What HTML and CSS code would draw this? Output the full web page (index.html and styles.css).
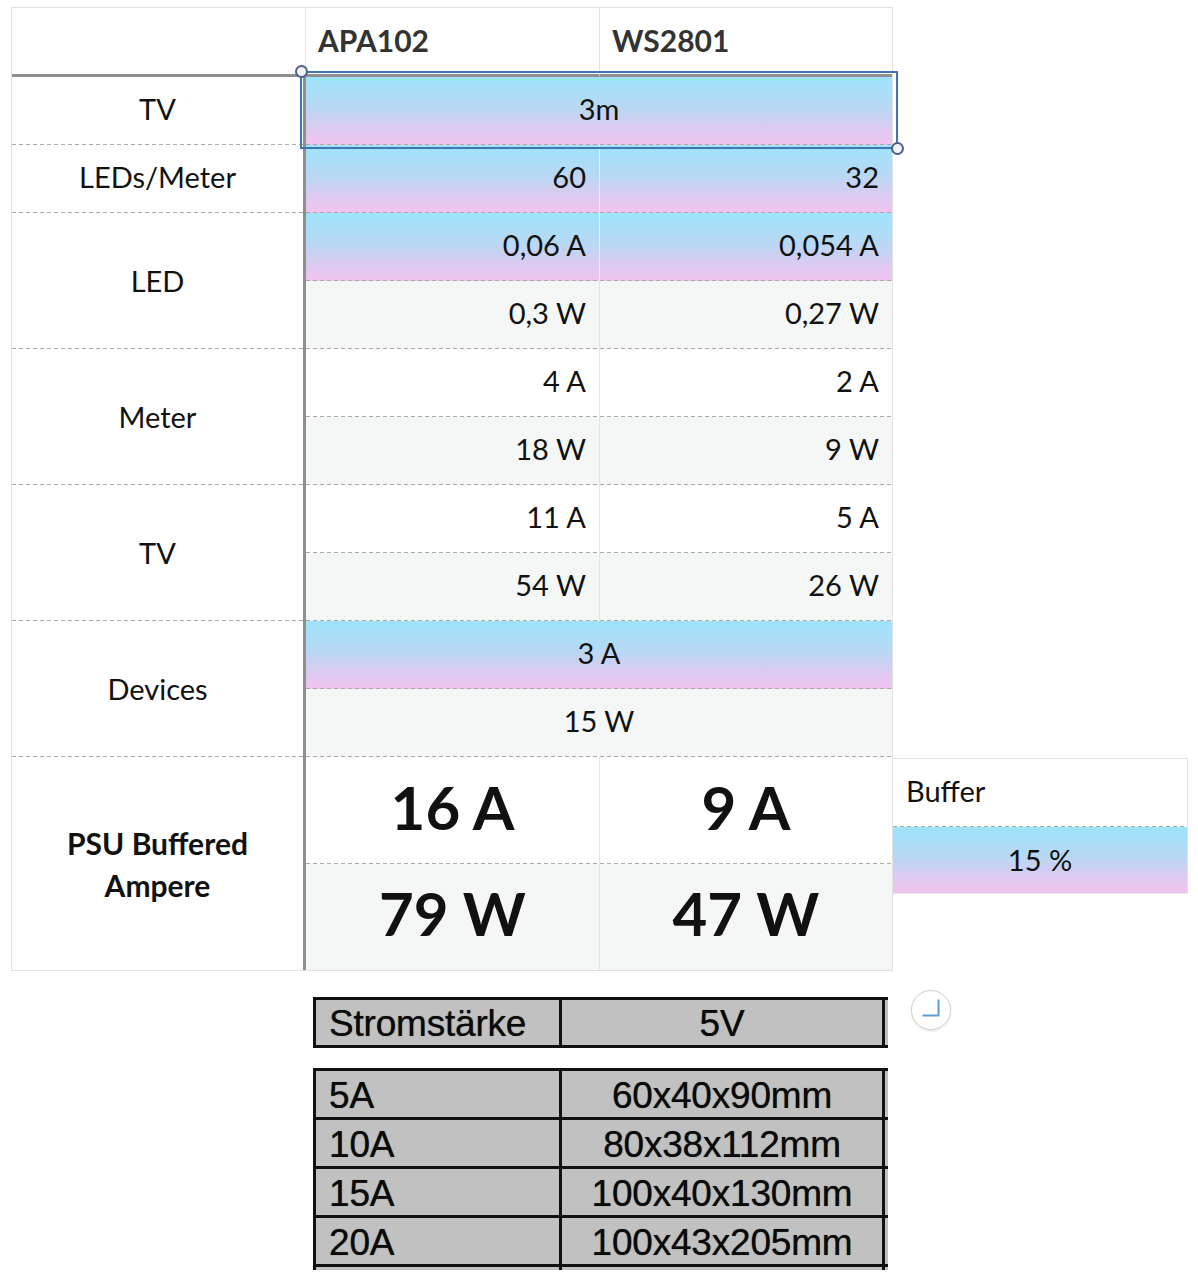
FILE: index.html
```html
<!DOCTYPE html>
<html lang="de">
<head>
<meta charset="utf-8">
<title>LED PSU</title>
<link rel="stylesheet" href="styles.css">
</head>
<body>
<div class="canvas">
  <div class="top-row">
    <div class="sheet">
      <div class="c hl"></div>
      <div class="c hd">APA102</div>
      <div class="c hd last">WS2801</div>

      <div class="c lbl dash">TV</div>
      <div class="c grad dash center span2">3m</div>

      <div class="c lbl dash">LEDs/Meter</div>
      <div class="c grad dash num sep">60</div>
      <div class="c grad dash num">32</div>

      <div class="c lbl dash rows2">LED</div>
      <div class="c grad dash num sep">0,06 A</div>
      <div class="c grad dash num">0,054 A</div>
      <div class="c grey dash num sep">0,3 W</div>
      <div class="c grey dash num">0,27 W</div>

      <div class="c lbl dash rows2">Meter</div>
      <div class="c white dash num sep">4 A</div>
      <div class="c white dash num">2 A</div>
      <div class="c grey dash num sep">18 W</div>
      <div class="c grey dash num">9 W</div>

      <div class="c lbl dash rows2">TV</div>
      <div class="c white dash num sep">11 A</div>
      <div class="c white dash num">5 A</div>
      <div class="c grey dash num sep">54 W</div>
      <div class="c grey dash num">26 W</div>

      <div class="c lbl dash rows2">Devices</div>
      <div class="c grad dash center span2">3 A</div>
      <div class="c grey dash center span2">15 W</div>

      <div class="c lbl rows2 psu">PSU Buffered<br>Ampere</div>
      <div class="c white dash big sep">16 A</div>
      <div class="c white dash big">9 A</div>
      <div class="c grey big sep">79 W</div>
      <div class="c grey big">47 W</div>
    </div>

    <div class="buffer">
      <div class="buf-head dash">Buffer</div>
      <div class="buf-val grad">15 %</div>
    </div>
  </div>

  <div class="bottom-row">
    <div class="snap">
      <div class="st st-head">
        <div class="sc left">Stromstärke</div>
        <div class="sc mid">5V</div>
        <div class="sc mid"></div>
      </div>
      <div class="st st-body">
        <div class="sc left">5A</div>
        <div class="sc mid">60x40x90mm</div>
        <div class="sc mid"></div>
        <div class="sc left">10A</div>
        <div class="sc mid">80x38x112mm</div>
        <div class="sc mid"></div>
        <div class="sc left">15A</div>
        <div class="sc mid">100x40x130mm</div>
        <div class="sc mid"></div>
        <div class="sc left">20A</div>
        <div class="sc mid">100x43x205mm</div>
        <div class="sc mid"></div>
        <div class="sc left"></div>
        <div class="sc mid"></div>
        <div class="sc mid"></div>
      </div>
    </div>
    <div class="resize-btn">
      <svg width="40" height="40" viewBox="0 0 40 40">
        <circle cx="20" cy="20" r="19.5" fill="#fff" stroke="#cfcfcf" stroke-width="1"/>
        <path d="M27.5 9.5 V25.5 H11.5" fill="none" stroke="#5e9dd6" stroke-width="2"/>
      </svg>
    </div>
  </div>

  <div class="selection"></div>
  <div class="handle h-tl"></div>
  <div class="handle h-br"></div>
</div>
</body>
</html>
```

FILE: styles.css
```css
html, body {
  margin: 0;
  padding: 0;
  background: #fff;
}

body {
  font-family: Lato, "Noto Sans", "DejaVu Sans", sans-serif;
  color: #111;
}

.canvas {
  position: relative;
  width: 1198px;
  min-height: 1280px;
  overflow: hidden;
}

.top-row {
  display: flex;
  align-items: flex-start;
  padding: 7px 0 0 11px;
}

.sheet {
  display: grid;
  grid-template-columns: 294px 294px 292px;
  grid-template-rows: 69px repeat(10, 68px) 107px 106px;
  width: 880px;
  border: 1px solid #e1e1e1;
}

.c {
  box-sizing: border-box;
  display: flex;
  align-items: center;
  font-size: 29px;
  line-height: 1;
  padding-bottom: 5px;
  --dash: repeating-linear-gradient(90deg, #a9a9a9 0 4px, transparent 4px 7px);
}

.dash {
  background-image: var(--dash);
  background-size: 100% 1px;
  background-position: left bottom;
  background-repeat: no-repeat;
}

.hl {
  border-bottom: 3px solid #8f8f8f;
  border-right: 1px solid #e3e3e3;
}

.hd {
  border-bottom: 3px solid #8f8f8f;
  border-right: 1px solid #e3e3e3;
  font-weight: 700;
  font-size: 30px;
  color: #333;
  padding-left: 12px;
  padding-bottom: 2px;
}

.hd.last {
  border-right: 0;
}

.lbl {
  justify-content: center;
  text-align: center;
  border-right: 3px solid #8f8f8f;
  background-color: #fff;
}

.lbl.rows2 {
  padding-bottom: 1px;
}

.rows2 {
  grid-row: span 2;
}

.span2 {
  grid-column: span 2;
}

.lbl.psu {
  font-weight: 700;
  font-size: 30px;
  line-height: 42px;
  padding-bottom: 0;
}

.num {
  justify-content: flex-end;
  padding-right: 13px;
}

.center {
  justify-content: center;
}

.sep {
  border-right: 1px solid #e4e6e5;
}

.white {
  background-color: #fff;
}

.grey {
  background-color: #f4f7f6;
}

.grad {
  background-image: var(--dash), linear-gradient(180deg, #9de4fb 0%, #b8d8f4 45%, #dccbf0 75%, #f1c3ee 100%);
  background-size: 100% 1px, 100% 100%;
  background-position: left bottom, 0 0;
  background-repeat: no-repeat, no-repeat;
}

.grad.sep {
  border-right-color: rgba(225, 225, 235, 0.6);
}

.big {
  justify-content: center;
  font-weight: 700;
  font-size: 60px;
  padding-bottom: 8px;
}

/* Buffer mini table */
.buffer {
  box-sizing: border-box;
  width: 295px;
  margin-top: 751px;
  border-top: 1px solid #e1e1e1;
  border-right: 1px solid #e1e1e1;
  border-bottom: 1px solid #e8e8e8;
}

.buf-head,
.buf-val {
  box-sizing: border-box;
  display: flex;
  align-items: center;
  font-size: 29px;
  line-height: 1;
  --dash: repeating-linear-gradient(90deg, #a9a9a9 0 4px, transparent 4px 7px);
}

.buf-head {
  height: 68px;
  padding-left: 13px;
  padding-bottom: 6px;
}

.buf-val {
  height: 66px;
  justify-content: center;
  background-image: linear-gradient(180deg, #9de4fb 0%, #b8d8f4 45%, #dccbf0 75%, #f1c3ee 100%);
  background-size: 100% 100%;
  padding-bottom: 2px;
}

/* Bottom: pasted picture of a table */
.bottom-row {
  display: flex;
  align-items: flex-start;
  margin-top: 19px;
  padding-left: 313px;
}

.snap {
  width: 575px;
  height: 273px;
  margin-top: 7px;
  overflow: hidden;
  font-family: "Liberation Sans", Arial, sans-serif;
  color: #0a0a0a;
}

.st {
  display: grid;
  grid-template-columns: 243px 323px 200px;
  width: 766px;
  background: #c1c1c1;
  border-left: 3px solid #111;
  border-top: 3px solid #111;
}

.st-head {
  grid-template-rows: 48px;
}

.st-head .sc {
  border-bottom: 3px solid #111;
}

.st-body {
  margin-top: 20px;
  grid-auto-rows: 49px;
}

.st-body .sc {
  border-bottom: 3px solid #111;
}

.sc {
  box-sizing: border-box;
  display: flex;
  align-items: center;
  font-size: 37px;
  line-height: 1;
  letter-spacing: -0.2px;
  text-shadow: 0 0 0.8px rgba(0,0,0,0.7);
  padding-top: 2px;
}

.sc.left {
  padding-left: 13px;
}

.sc.mid {
  justify-content: center;
  border-left: 3px solid #111;
}

.resize-btn {
  width: 40px;
  height: 40px;
  margin-left: 23px;
  border-radius: 50%;
  box-shadow: 0 1px 2px rgba(0,0,0,0.12);
}

.resize-btn svg {
  display: block;
}

/* Selection overlay */
.selection {
  position: absolute;
  left: 300px;
  top: 71px;
  width: 594px;
  height: 74px;
  border: 2px solid #3f74b6;
  pointer-events: none;
}

.handle {
  position: absolute;
  width: 9px;
  height: 9px;
  border-radius: 50%;
  background: #f2f3f7;
  border: 2px solid #4d5f8c;
}

.h-tl {
  left: 295px;
  top: 65px;
}

.h-br {
  left: 891px;
  top: 142px;
}
```
